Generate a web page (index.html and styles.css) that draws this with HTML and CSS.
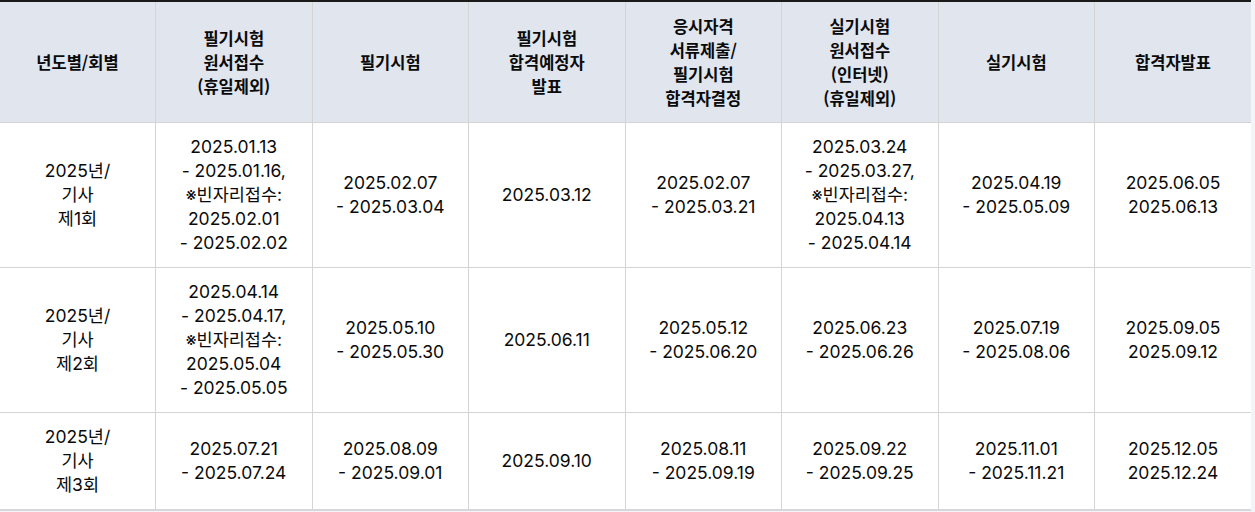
FILE: index.html
```html
<!DOCTYPE html>
<html lang="ko">
<head>
<meta charset="utf-8">
<link rel="stylesheet" href="styles.css">
</head>
<body>
<table class="sched">
  <thead>
    <tr>
      <th>년도별/회별</th>
      <th>필기시험<br>원서접수<br>(휴일제외)</th>
      <th>필기시험</th>
      <th>필기시험<br>합격예정자<br>발표</th>
      <th>응시자격<br>서류제출/<br>필기시험<br>합격자결정</th>
      <th>실기시험<br>원서접수<br>(인터넷)<br>(휴일제외)</th>
      <th>실기시험</th>
      <th>합격자발표</th>
    </tr>
  </thead>
  <tbody>
    <tr>
      <td>2025년/<br>기사<br>제1회</td>
      <td>2025.01.13<br>- 2025.01.16,<br>※빈자리접수:<br>2025.02.01<br>- 2025.02.02</td>
      <td>2025.02.07<br>- 2025.03.04</td>
      <td>2025.03.12</td>
      <td>2025.02.07<br>- 2025.03.21</td>
      <td>2025.03.24<br>- 2025.03.27,<br>※빈자리접수:<br>2025.04.13<br>- 2025.04.14</td>
      <td>2025.04.19<br>- 2025.05.09</td>
      <td>2025.06.05<br>2025.06.13</td>
    </tr>
    <tr>
      <td>2025년/<br>기사<br>제2회</td>
      <td>2025.04.14<br>- 2025.04.17,<br>※빈자리접수:<br>2025.05.04<br>- 2025.05.05</td>
      <td>2025.05.10<br>- 2025.05.30</td>
      <td>2025.06.11</td>
      <td>2025.05.12<br>- 2025.06.20</td>
      <td>2025.06.23<br>- 2025.06.26</td>
      <td>2025.07.19<br>- 2025.08.06</td>
      <td>2025.09.05<br>2025.09.12</td>
    </tr>
    <tr>
      <td>2025년/<br>기사<br>제3회</td>
      <td>2025.07.21<br>- 2025.07.24</td>
      <td>2025.08.09<br>- 2025.09.01</td>
      <td>2025.09.10</td>
      <td>2025.08.11<br>- 2025.09.19</td>
      <td>2025.09.22<br>- 2025.09.25</td>
      <td>2025.11.01<br>- 2025.11.21</td>
      <td>2025.12.05<br>2025.12.24</td>
    </tr>
  </tbody>
</table>
</body>
</html>
```
FILE: styles.css
```css
html, body {
  margin: 0;
  padding: 0;
  background: #f3f4f7;
}
.sched {
  width: 1251px;
  border-collapse: collapse;
  table-layout: fixed;
  background: #ffffff;
  font-family: Inter, "Noto Sans CJK KR", sans-serif;
  color: #0a0a0a;
  border-top: 2px solid #1a1a1a;
  border-bottom: 2px solid #d6d6dc;
}
.sched th,
.sched td {
  text-align: center;
  vertical-align: middle;
  border-right: 1px solid #d4d4d4;
  border-bottom: 1px solid #d4d4d4;
  padding: 12px 2px;
  line-height: 24px;
}
.sched th:last-child,
.sched td:last-child {
  border-right: none;
}
.sched th {
  background: #e0e5ee;
  font-family: "Noto Sans CJK KR", sans-serif;
  font-weight: 700;
  font-size: 16.5px;
  line-height: 24px;
}
.sched td {
  font-size: 17.5px;
}
.sched th:first-child,
.sched td:first-child {
  width: 151px;
}
```
